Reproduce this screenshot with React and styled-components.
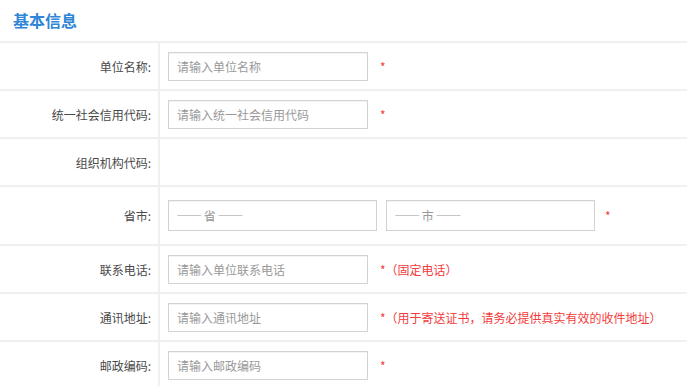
import React from "react";
import styled, { createGlobalStyle } from "styled-components";

const GlobalStyle = createGlobalStyle`
  body {
    margin: 0;
    background: #fff;
    font-family: "Noto Sans CJK SC", "Noto Sans", sans-serif;
  }
`;

const Page = styled.div`
  width: 687px;
  height: 386px;
  overflow: hidden;
  background: #fff;
`;

const Title = styled.h2`
  margin: 0;
  height: 43px;
  display: flex;
  align-items: center;
  padding: 0 0 2px 13px;
  box-sizing: border-box;
  font-size: 16px;
  font-weight: bold;
  color: #2f86d6;
  border-bottom: 2px solid #f0f0f0;
`;

const Table = styled.div`
  display: flex;
  flex-direction: column;
`;

const Row = styled.div`
  display: grid;
  grid-template-columns: 160px 1fr;
  height: ${(props) => (props.tall ? "59px" : "48px")};
  border-bottom: 2px solid #f0f0f0;
  box-sizing: border-box;
`;

const Label = styled.div`
  display: flex;
  align-items: center;
  justify-content: flex-end;
  padding-right: 7px;
  font-size: 12px;
  color: #4a4a4a;
  border-right: 2px solid #f0f0f0;
`;

const Field = styled.div`
  display: flex;
  align-items: center;
  padding-left: 8px;
  gap: 9px;
`;

const Input = styled.input`
  width: 200px;
  height: 29px;
  box-sizing: border-box;
  border: 1px solid #d2d2d2;
  box-shadow: inset 0 1px 1px rgba(0, 0, 0, 0.05);
  padding: 0 8px;
  font-size: 12px;
  font-family: inherit;
  color: #333;
  outline: none;

  &::placeholder {
    color: #999;
  }
`;

const Select = styled.select`
  width: 209px;
  height: 31px;
  box-sizing: border-box;
  border: 1px solid #d2d2d2;
  box-shadow: inset 0 1px 1px rgba(0, 0, 0, 0.05);
  padding: 0 8px;
  font-size: 12px;
  font-family: inherit;
  color: #999;
  background: #fff;
  appearance: none;
  border-radius: 0;
  outline: none;
`;

const Hint = styled.span`
  font-size: 12px;
  color: #f23c3c;
  margin-left: ${(props) => props.offset || "3px"};
  white-space: nowrap;
`;

const rows = [
  { label: "单位名称:", placeholder: "请输入单位名称", hint: "*" },
  { label: "统一社会信用代码:", placeholder: "请输入统一社会信用代码", hint: "*" },
  { label: "组织机构代码:" },
  { label: "省市:", select: true },
  { label: "联系电话:", placeholder: "请输入单位联系电话", hint: "*（固定电话）" },
  {
    label: "通讯地址:",
    placeholder: "请输入通讯地址",
    hint: "*（用于寄送证书，请务必提供真实有效的收件地址）",
  },
  { label: "邮政编码:", placeholder: "请输入邮政编码", hint: "*" },
];

export default function App() {
  return (
    <Page>
      <GlobalStyle />
      <Title>基本信息</Title>
      <Table>
        {rows.map((row, i) => (
          <Row key={i} tall={row.select}>
            <Label>{row.label}</Label>
            <Field>
              {row.select ? (
                <>
                  <Select defaultValue="">
                    <option value="">── 省 ──</option>
                  </Select>
                  <Select defaultValue="">
                    <option value="">── 市 ──</option>
                  </Select>
                  <Hint offset="1px">*</Hint>
                </>
              ) : row.placeholder ? (
                <>
                  <Input placeholder={row.placeholder} />
                  <Hint>{row.hint}</Hint>
                </>
              ) : null}
            </Field>
          </Row>
        ))}
      </Table>
    </Page>
  );
}
